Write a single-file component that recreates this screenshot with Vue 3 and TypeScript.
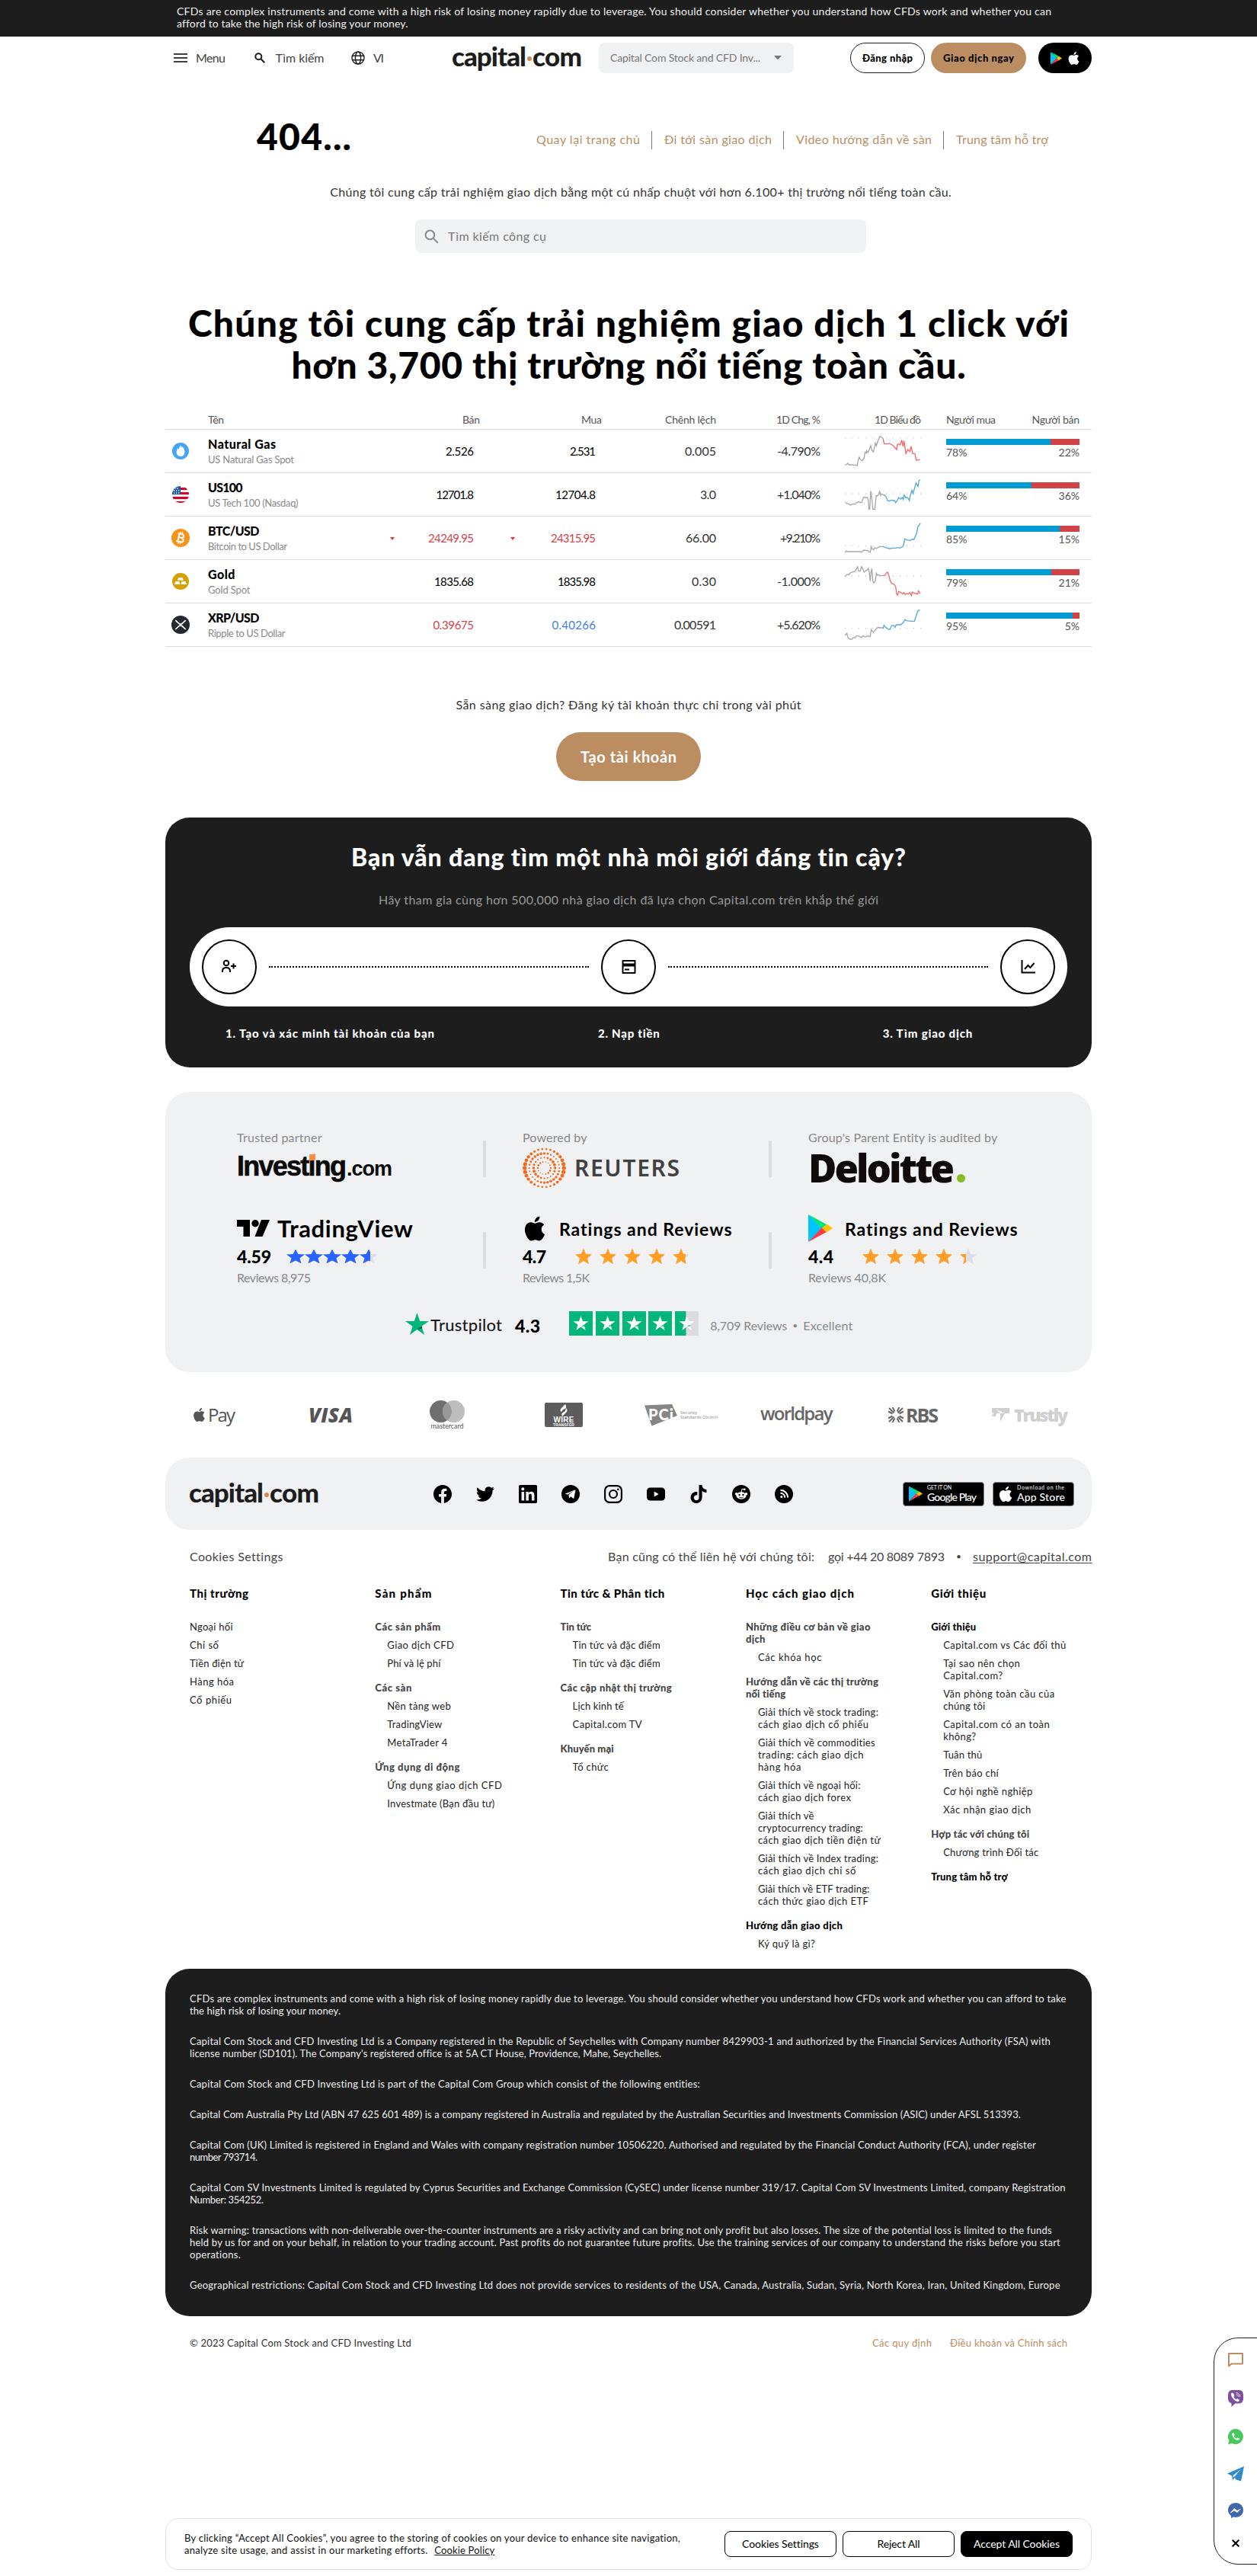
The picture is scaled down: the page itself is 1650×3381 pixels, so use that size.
<script setup lang="ts">
type Pair = [string, number]
interface Quote {
  icon: string; name: Pair; sub: Pair; sell: Pair; buy: Pair; sellTone?: string; buyTone?: string
  spread: Pair; chg: Pair; up: boolean; base: number; prev: string; day: string; long: number; arrow?: boolean
}
interface LinkItem { lines: Pair[]; head?: boolean; dark?: boolean; gap?: boolean; flat?: boolean }
interface LinkColumn { title: Pair; items: LinkItem[] }

/* Tracks a single line of text so that it fills the given width. */
const vFit = {
  mounted(el: HTMLElement, binding: { value: number }) {
    const count = Array.from(el.textContent ?? '').length
    if (count < 2) return
    const natural = el.getBoundingClientRect().width
    const spacing = (binding.value - natural) / (count - 1)
    el.style.letterSpacing = spacing.toFixed(3) + 'px'
    el.style.marginRight = (-spacing).toFixed(3) + 'px'
  },
}

const quotes: Quote[] = [
  { icon: 'gas', name: ['Natural Gas', 89], sub: ['US Natural Gas Spot', 113], sell: ['2.526', 37], buy: ['2.531', 34], spread: ['0.005', 41], chg: ['-4.790%', 57], up: false, base: 8, long: 78,
    prev: '0,116 8,112 11,108 16,114 28,114 36,116 40,114 48,118 50,108 54,92 57,84 60,92 68,98 72,94 76,86 80,64 84,68 86,58 91,66 97,52 102,38 106,56 112,64 118,40 120,26 124,40 130,22 136,6 138,2 142,4 150,10',
    day: '150,10 155,32 170,32 175,30 190,38 196,46 204,54 207,34 212,32 218,36 224,16 229,42 233,20 240,70 248,54 256,62 261,42 267,70 276,70 281,96 296,94' },
  { icon: 'us', name: ['US100', 45.5], sub: ['US Tech 100 (Nasdaq)', 118.5], sell: ['12701.8', 49.5], buy: ['12704.8', 53], spread: ['3.0', 21], chg: ['+1.040%', 57], up: true, base: 57, long: 64,
    prev: '0,90 8,96 16,98 22,102 30,98 40,98 45,94 54,88 60,92 66,92 70,80 76,70 82,72 88,72 92,80 95,118 98,118 102,46 108,90 110,118 118,118 121,92 123,64 128,66 133,60 137,46 141,64 143,58 150,60',
    day: '150,60 158,64 164,72 168,84 174,86 182,82 190,84 196,84 200,92 206,84 212,72 220,78 226,72 230,80 234,62 240,74 244,70 250,76 254,84 258,62 264,44 268,56 274,38 280,14 288,28 292,6 296,2' },
  { icon: 'btc', name: ['BTC/USD', 67.5], sub: ['Bitcoin to US Dollar', 104], sell: ['24249.95', 60], buy: ['24315.95', 59], sellTone: 'red', buyTone: 'red', arrow: true, spread: ['66.00', 40], chg: ['+9.210%', 53], up: true, base: 92, long: 85,
    prev: '0,118 4,112 10,114 30,114 60,114 66,116 74,108 90,110 96,116 100,116 104,94 108,104 114,106 118,98 124,102 130,98 140,94 150,94',
    day: '150,94 160,98 176,102 190,100 200,100 206,98 216,100 222,98 230,92 236,64 244,68 256,70 264,66 272,66 278,52 282,44 288,14 294,8 297,2' },
  { icon: 'gold', name: ['Gold', 35.5], sub: ['Gold Spot', 55.5], sell: ['1835.68', 52], buy: ['1835.98', 50], spread: ['0.30', 32], chg: ['-1.000%', 57], up: false, base: 39, long: 79,
    prev: '0,42 6,36 10,32 16,34 20,28 28,24 40,20 46,10 50,2 54,20 60,20 66,2 70,10 76,24 84,18 92,10 96,22 100,60 102,30 106,10 110,60 114,66 120,58 124,28 128,36 132,34 140,38 150,38',
    day: '150,38 158,36 164,26 168,24 172,32 178,56 184,68 192,70 200,80 204,110 208,114 212,100 220,104 228,110 232,104 238,112 244,108 250,110 256,104 262,116 266,102 272,106 280,108 286,110 290,98 297,108' },
  { icon: 'xrp', name: ['XRP/USD', 67.5], sub: ['Ripple to US Dollar', 101.5], sell: ['0.39675', 53.5], buy: ['0.40266', 57.5], sellTone: 'red', buyTone: 'blue', spread: ['0.00591', 55], chg: ['+5.620%', 57], up: true, base: 74, long: 95,
    prev: '0,102 8,94 12,110 18,116 26,118 34,110 40,112 46,104 54,104 60,108 66,110 72,104 80,108 90,104 100,106 104,78 112,90 122,78 130,70 140,72 150,72',
    day: '150,76 154,62 160,70 172,78 178,78 184,64 192,62 198,70 202,60 220,60 230,52 236,40 244,44 260,46 274,46 280,28 288,4 296,2' },
]

const row = (text: string, width: number): LinkItem => ({ lines: [[text, width]] })
const rows = (...lines: Pair[]): LinkItem => ({ lines })
const flat = (text: string, width: number): LinkItem => ({ lines: [[text, width]], flat: true })
const head = (text: string, width: number, gap = true, dark = false): LinkItem => ({ lines: [[text, width]], head: true, gap, dark })

const columns: LinkColumn[] = [
  { title: ['Thị trường', 77], items: [flat('Ngoại hối', 56.5), flat('Chỉ số', 38), flat('Tiền điện tử', 71), flat('Hàng hóa', 58), flat('Cổ phiếu', 55)] },
  { title: ['Sản phẩm', 74], items: [
    head('Các sản phẩm', 86, false), row('Giao dịch CFD', 87.5), row('Phí và lệ phí', 70),
    head('Các sàn', 48), row('Nền tảng web', 83.5), row('TradingView', 72), row('MetaTrader 4', 79),
    head('Ứng dụng di động', 111), row('Ứng dụng giao dịch CFD', 150.5), row('Investmate (Bạn đầu tư)', 141)] },
  { title: ['Tin tức & Phân tich', 137], items: [
    head('Tin tức', 40.5, false), row('Tin tức và đặc điểm', 115), row('Tin tức và đặc điểm', 115),
    head('Các cập nhật thị trường', 146), row('Lịch kinh tế', 67), row('Capital.com TV', 91),
    head('Khuyến mại', 70), row('Tổ chức', 47)] },
  { title: ['Học cách giao dịch', 142], items: [
    { head: true, lines: [['Những điều cơ bản về giao', 163.5], ['dịch', 25.5]] }, row('Các khóa học', 83.5),
    { head: true, gap: true, lines: [['Hướng dẫn về các thị trường', 174], ['nổi tiếng', 52.5]] },
    rows(['Giải thích về stock trading:', 158], ['cách giao dịch cổ phiếu', 145]),
    rows(['Giải thích về commodities', 154], ['trading: cách giao dịch', 138.5], ['hàng hóa', 56.5]),
    rows(['Giải thích về ngoại hối:', 134.5], ['cách giao dịch forex', 122]),
    rows(['Giải thích về', 73.5], ['cryptocurrency trading:', 138], ['cách giao dịch tiền điện tử', 161]),
    rows(['Giải thích về Index trading:', 158], ['cách giao dịch chỉ số', 128.5]),
    rows(['Giải thích về ETF trading:', 146.5], ['cách thức giao dịch ETF', 145]),
    head('Hướng dẫn giao dịch', 127, true, true), row('Ký quỹ là gì?', 75)] },
  { title: ['Giới thiệu', 72], items: [
    head('Giới thiệu', 59, false, true), row('Capital.com vs Các đối thủ', 161),
    rows(['Tại sao nên chọn', 100.5], ['Capital.com?', 78]),
    rows(['Văn phòng toàn cầu của', 146], ['chúng tôi', 55]),
    rows(['Capital.com có an toàn', 139.5], ['không?', 43]),
    row('Tuân thủ', 51), row('Trên báo chí', 72.5), row('Cơ hội nghề nghiệp', 117), row('Xác nhận giao dịch', 115),
    head('Hợp tác với chúng tôi', 129), row('Chương trình Đối tác', 125), head('Trung tâm hỗ trợ', 100.5, true, true)] },
]

const legal: Pair[][] = [
  [['CFDs are complex instruments and come with a high risk of losing money rapidly due to leverage. You should consider whether you understand how CFDs work and whether you can afford to take', 1150], ['the high risk of losing your money.', 198]],
  [['Capital Com Stock and CFD Investing Ltd is a Company registered in the Republic of Seychelles with Company number 8429903-1 and authorized by the Financial Services Authority (FSA) with', 1130], ["license number (SD101). The Company's registered office is at 5A CT House, Providence, Mahe, Seychelles.", 618.5]],
  [['Capital Com Stock and CFD Investing Ltd is part of the Capital Com Group which consist of the following entities:', 670.5]],
  [['Capital Com Australia Pty Ltd (ABN 47 625 601 489) is a company registered in Australia and regulated by the Australian Securities and Investments Commission (ASIC) under AFSL 513393.', 1091]],
  [['Capital Com (UK) Limited is registered in England and Wales with company registration number 10506220. Authorised and regulated by the Financial Conduct Authority (FCA), under register', 1111], ['number 793714.', 89]],
  [['Capital Com SV Investments Limited is regulated by Cyprus Securities and Exchange Commission (CySEC) under license number 319/17. Capital Com SV Investments Limited, company Registration', 1150], ['Number: 354252.', 97]],
  [['Risk warning: transactions with non-deliverable over-the-counter instruments are a risky activity and can bring not only profit but also losses. The size of the potential loss is limited to the funds', 1132], ['held by us for and on your behalf, in relation to your trading account. Past profits do not guarantee future profits. Use the training services of our company to understand the risks before you start', 1142.5], ['operations.', 67]],
  [['Geographical restrictions: Capital Com Stock and CFD Investing Ltd does not provide services to residents of the USA, Canada, Australia, Sudan, Syria, North Korea, Iran, United Kingdom, Europe', 1143]],
]

/* Concentric rings of dots; the dots swell along an axis that turns from ring to ring. */
const rings = [{ r: 8.2, n: 14, s: 1, t: 0.9 }, { r: 13.7, n: 20, s: 1.45, t: -0.9 }, { r: 19.2, n: 28, s: 1.35, t: 2.2 }, { r: 25, n: 30, s: 1.95, t: 0 }]
const reutersDots = rings.flatMap((ring) => Array.from({ length: ring.n }, (_, i) => {
  const a = (i / ring.n) * Math.PI * 2
  return { x: 28.5 + ring.r * Math.cos(a) * 1.03, y: 27 + ring.r * Math.sin(a), s: ring.s * (1 + 0.35 * Math.cos(2 * a - ring.t)) }
}))

const star = 'M12 1.5l3.1 7.2 7.9.7-6 5.1 1.9 7.7L12 18l-6.9 4.2L7 14.5 1 9.4l7.9-.7z'
const apple = 'M12.152 6.896c-.948 0-2.415-1.078-3.96-1.04-2.04.027-3.91 1.183-4.961 3.014-2.117 3.675-.546 9.103 1.519 12.09 1.013 1.454 2.208 3.09 3.792 3.039 1.52-.065 2.09-.987 3.935-.987 1.831 0 2.35.987 3.96.948 1.637-.026 2.676-1.48 3.676-2.948 1.156-1.688 1.636-3.325 1.662-3.415-.039-.013-3.182-1.221-3.22-4.857-.026-3.04 2.48-4.494 2.597-4.559-1.429-2.09-3.623-2.324-4.39-2.376-2-.156-3.675 1.09-4.61 1.09zM15.53 3.83c.843-1.012 1.4-2.427 1.245-3.83-1.207.052-2.662.805-3.532 1.818-.78.896-1.454 2.338-1.273 3.714 1.338.104 2.715-.688 3.559-1.701'
const fills = [100, 100, 100, 100]
const ratings = {
  tv: [...fills, 60], ios: [...fills, 78], android: [...fills, 35],
}
</script>

<template>
  <div class="page">
    <div class="topbar">
      <div><span v-fit="1148">CFDs are complex instruments and come with a high risk of losing money rapidly due to leverage. You should consider whether you understand how CFDs work and whether you can</span></div>
      <div><span v-fit="303">afford to take the high risk of losing your money.</span></div>
    </div>

    <header class="header">
      <svg class="ic-menu" width="18" height="12" viewBox="0 0 18 12"><path d="M0 1h18M0 6h18M0 11h18" stroke="#000" stroke-width="1.7" /></svg>
      <span class="nav nav-menu" v-fit="39">Menu</span>
      <svg class="ic-search" width="16" height="16" viewBox="0 0 16 16" fill="none" stroke="#1d1d1d" stroke-width="2"><circle cx="6.3" cy="6.3" r="4" /><path d="M9.3 9.3l5 5" /></svg>
      <span class="nav nav-search" v-fit="64">Tìm kiếm</span>
      <svg class="ic-globe" width="18" height="18" viewBox="0 0 18 18" fill="none" stroke="#1d1d1d" stroke-width="1.4"><circle cx="9" cy="9" r="8" /><ellipse cx="9" cy="9" rx="3.6" ry="8" /><path d="M1.6 6.2h14.8M1.6 11.8h14.8" /></svg>
      <span class="nav nav-lang" v-fit="14">VI</span>
      <div class="logo"><span v-fit="98">capital</span><i></i><span v-fit="65">com</span></div>
      <div class="select"><span v-fit="197">Capital Com Stock and CFD Inv...</span><svg width="10" height="6" viewBox="0 0 10 6"><path d="M0 0h10L5 5.5z" fill="#777" /></svg></div>
      <button class="btn login"><span v-fit="66">Đăng nhập</span></button>
      <button class="btn trade"><span v-fit="93">Giao dịch ngay</span></button>
      <div class="apps">
        <svg width="15" height="17" viewBox="0 0 32 36"><path d="M0 1v34l17-17z" fill="#00c8ff" /><path d="M0 0l23 12-6 6z" fill="#00e676" /><path d="M0 36l23-12-6-6z" fill="#ff3a44" /><path d="M23 12l9 6-9 6-6-6z" fill="#ffc107" /></svg>
        <svg width="17" height="17" viewBox="0 0 24 24"><path :d="apple" fill="#fff" /></svg>
      </div>
    </header>

    <section class="hero">
      <div class="hero-row">
        <h1><span v-fit="124">404...</span></h1>
        <nav>
          <a><span v-fit="136">Quay lại trang chủ</span></a>
          <a><span v-fit="141">Đi tới sàn giao dịch</span></a>
          <a><span v-fit="178">Video hướng dẫn về sàn</span></a>
          <a><span v-fit="121">Trung tâm hỗ trợ</span></a>
        </nav>
      </div>
      <p class="lead"><span v-fit="816">Chúng tôi cung cấp trải nghiệm giao dịch bằng một cú nhấp chuột với hơn 6.100+ thị trường nổi tiếng toàn cầu.</span></p>
      <div class="searchbox">
        <svg width="19" height="19" viewBox="0 0 19 19" fill="none" stroke="#8a8a8a" stroke-width="2"><circle cx="7.4" cy="7.4" r="5.8" /><path d="M11.6 11.6l6.2 6.2" /></svg>
        <span v-fit="129">Tìm kiếm công cụ</span>
      </div>
    </section>

    <h2 class="title">
      <div><span v-fit="1156">Chúng tôi cung cấp trải nghiệm giao dịch 1 click với</span></div>
      <div><span v-fit="886">hơn 3,700 thị trường nổi tiếng toàn cầu.</span></div>
    </h2>

    <section class="table">
      <div class="tr th">
        <div class="c-icon"></div>
        <div class="c-name"><span v-fit="21">Tên</span></div>
        <div class="c-sell out"><span v-fit="23">Bán</span></div>
        <div class="c-buy out"><span v-fit="27">Mua</span></div>
        <div class="c-spread"><span v-fit="67">Chênh lệch</span></div>
        <div class="c-chg"><span v-fit="58">1D Chg, %</span></div>
        <div class="c-chart"><span v-fit="61">1D Biểu đồ</span></div>
        <div class="c-mood"><span v-fit="65">Người mua</span><span v-fit="62.5">Người bán</span></div>
      </div>
      <div v-for="q in quotes" :key="q.icon" class="tr">
        <div class="c-icon">
          <svg v-if="q.icon === 'gas'" width="22" height="22" viewBox="0 0 22 22"><circle cx="11" cy="11" r="11" fill="#45a5f7" /><path d="M11.4 3.5c.8 1.4 1 2.300 1.300 3.500.5-.5.6-1.200.6-1.900 1.900 2 3.300 4.600 3.100 7.300-.2 3.300-2.300 5.600-5.300 5.600-3.200 0-5.500-2.400-5.500-5.500 0-2.400 1.200-4.200 2.200-5.500.1.900.3 1.600.9 2.100.2-2.200.9-4.200 2.700-5.600z" fill="#fff" /></svg>
          <svg v-else-if="q.icon === 'us'" width="22" height="22" viewBox="0 0 22 22"><clipPath id="flag"><circle cx="11" cy="11" r="11" /></clipPath><g clip-path="url(#flag)"><path fill="#f4f4f4" d="M0 0h22v22H0z" /><path fill="#d80027" d="M0 2h22v3H0zM0 8h22v3H0zM0 14h22v3H0zM0 20h22v2H0z" /><path fill="#1457b0" d="M0 0h11v11H0z" /><path d="M3.500 3h6M2 6h8M2 9h8" stroke="#fff" stroke-width="1.300" stroke-dasharray="1.300 1.700" /></g></svg>
          <svg v-else-if="q.icon === 'btc'" class="big" width="24" height="24" viewBox="0 0 24 24"><circle cx="12" cy="12" r="12" fill="#f7931a" /><g transform="rotate(13 12 12)" fill="none" stroke="#fff" stroke-width="2"><path d="M9.300 6.500v11M7.300 6.800h5.700c3.300 0 3.300 4.800 0 4.800H9.500M13 11.900c4.300 0 4.300 5.300 0 5.300H7.300" /><path d="M10.500 4v3M13 4v3M10.500 17v3M13 17v3" stroke-width="1.300" /></g></svg>
          <svg v-else-if="q.icon === 'gold'" width="22" height="22" viewBox="0 0 22 22"><circle cx="11" cy="11" r="11" fill="#d99e00" /><path d="M8.500 6h5l1.500 3.700H7zM4.500 11h4.800l1.300 4H3zM12.700 11h4.800l1.500 4h-7.600z" fill="#fff" /></svg>
          <svg v-else class="big" width="24" height="24" viewBox="0 0 24 24"><circle cx="12" cy="12" r="12" fill="#23292f" /><path d="M5.300 6.200l4.300 4a3.600 3.600 0 0 0 4.800 0l4.300-4M5.300 18l4.300-4a3.600 3.600 0 0 1 4.800 0l4.300 4" fill="none" stroke="#fff" stroke-width="1.700" /></svg>
        </div>
        <div class="c-name">
          <div class="name"><span v-fit="q.name[1]">{{ q.name[0] }}</span></div>
          <div class="sub"><span v-fit="q.sub[1]">{{ q.sub[0] }}</span></div>
        </div>
        <div class="c-sell" :class="q.sellTone"><svg v-if="q.arrow" width="6" height="4" viewBox="0 0 6 4"><path d="M0 0h6L3 4z" fill="#e5343d" /></svg><span v-fit="q.sell[1]">{{ q.sell[0] }}</span></div>
        <div class="c-buy" :class="q.buyTone"><svg v-if="q.arrow" width="6" height="4" viewBox="0 0 6 4"><path d="M0 0h6L3 4z" fill="#e5343d" /></svg><span v-fit="q.buy[1]">{{ q.buy[0] }}</span></div>
        <div class="c-spread"><span v-fit="q.spread[1]">{{ q.spread[0] }}</span></div>
        <div class="c-chg"><span v-fit="q.chg[1]">{{ q.chg[0] }}</span></div>
        <div class="c-chart">
          <svg width="100" height="40" viewBox="0 0 300 120" fill="none" stroke-width="4">
            <path :d="`M0 ${q.base}H300`" stroke="#c4c4c4" stroke-width="4" stroke-dasharray="3 24" />
            <polyline :points="q.prev" stroke="#a8a8a8" />
            <polyline :points="q.day" :stroke="q.up ? '#55a9d5' : '#f2696f'" />
          </svg>
        </div>
        <div class="c-mood col">
          <div class="bar"><i :style="{ width: q.long + '%' }"></i></div>
          <div class="pct"><span>{{ q.long }}%</span><span>{{ 100 - q.long }}%</span></div>
        </div>
      </div>
    </section>

    <section class="cta">
      <p><span v-fit="453">Sẵn sàng giao dịch? Đăng ký tài khoản thực chỉ trong vài phút</span></p>
      <button><span v-fit="126">Tạo tài khoản</span></button>
    </section>

    <section class="steps">
      <h3><span v-fit="729">Bạn vẫn đang tìm một nhà môi giới đáng tin cậy?</span></h3>
      <p><span v-fit="656">Hãy tham gia cùng hơn 500,000 nhà giao dịch đã lựa chọn Capital.com trên khắp thế giới</span></p>
      <div class="pill">
        <div class="ring"><svg width="22" height="20" viewBox="0 0 22 20" fill="none" stroke="#000" stroke-width="2"><circle cx="7" cy="5" r="3.300" /><path d="M2 17v-1.500C2 12.500 4.200 11 7 11s5 1.500 5 4.500V17M13 9h7M16.500 5.500v7" /></svg></div>
        <div class="dots"></div>
        <div class="ring"><svg width="21" height="18" viewBox="0 0 21 18"><path d="M2.500 1h16v16h-16z" fill="none" stroke="#000" stroke-width="2" stroke-linejoin="round" /><path d="M2 4.500h17v4H2zM5 11.500h6v2H5z" /></svg></div>
        <div class="dots"></div>
        <div class="ring"><svg width="19" height="18" viewBox="0 0 19 18" fill="none" stroke="#000" stroke-width="2"><path d="M1.500 0v16.500H19M5 12l4.500-5 3 3 5-6" /></svg></div>
      </div>
      <div class="labels"><span class="l1" v-fit="274">1. Tạo và xác minh tài khoản của bạn</span><span class="l2" v-fit="81">2. Nạp tiền</span><span class="l3" v-fit="117.5">3. Tìm giao dịch</span></div>
    </section>

    <section class="trust">
      <div class="trow r1">
        <div class="tcol">
          <div class="cap"><span v-fit="111.5">Trusted partner</span></div>
          <div class="investing"><b><span v-fit="144">Investing</span></b><span class="tld" v-fit="60">.com</span><i></i></div>
        </div>
        <div class="vr"></div>
        <div class="tcol">
          <div class="cap"><span v-fit="84.5">Powered by</span></div>
          <div class="reuters">
            <svg width="57" height="54" viewBox="0 0 57 54" fill="#f36a1e"><circle v-for="(d, i) in reutersDots" :key="i" :cx="d.x" :cy="d.y" :r="d.s" /></svg>
            <span v-fit="138">REUTERS</span>
          </div>
        </div>
        <div class="vr"></div>
        <div class="tcol">
          <div class="cap"><span v-fit="248.500">Group's Parent Entity is audited by</span></div>
          <div class="deloitte"><span v-fit="192">Deloitte</span><i></i></div>
        </div>
      </div>
      <div class="trow r2">
        <div class="tcol">
          <div class="brand"><svg width="43" height="22" viewBox="0 0 43 22"><path d="M0 0h17v22H8.500V9H0z" /><circle cx="24" cy="4.700" r="4.700" /><path d="M32 0h11l-9.500 22h-10z" /></svg><span class="tv" v-fit="178">TradingView</span></div>
          <div class="rate"><span class="num" v-fit="45">4.59</span><div class="stars tight"><svg v-for="(f, i) in ratings.tv" :key="i" width="24" height="22" viewBox="1 0 22 24" preserveAspectRatio="none"><linearGradient :id="'tv' + i"><stop :offset="f + '%'" stop-color="#2962ff" /><stop :offset="f + '%'" stop-color="#dcdde6" /></linearGradient><path :d="star" :fill="`url(#tv${i})`" /></svg></div></div>
          <div class="cap"><span v-fit="97">Reviews 8,975</span></div>
        </div>
        <div class="vr"></div>
        <div class="tcol">
          <div class="brand"><svg width="32" height="33" viewBox="0 0 24 24"><path :d="apple" /></svg><span class="rr" v-fit="227">Ratings and Reviews</span></div>
          <div class="rate"><span class="num" v-fit="31">4.7</span><div class="stars"><svg v-for="(f, i) in ratings.ios" :key="i" width="24" height="24" viewBox="0 0 24 24"><linearGradient :id="'ios' + i"><stop :offset="f + '%'" stop-color="#ff9f29" /><stop :offset="f + '%'" stop-color="#dcdde6" /></linearGradient><path :d="star" :fill="`url(#ios${i})`" /></svg></div></div>
          <div class="cap"><span v-fit="88">Reviews 1,5K</span></div>
        </div>
        <div class="vr"></div>
        <div class="tcol">
          <div class="brand"><svg width="32" height="36" viewBox="0 0 32 36"><path d="M0 0v36l18-18z" fill="#00c3ff" /><path d="M0 0l24 13-6 6z" fill="#00e676" /><path d="M0 36l24-13-6-6z" fill="#ff3a44" /><path d="M24 12.500l8 5.500-8 5.500-6-5.500z" fill="#ffc107" /></svg><span class="rr g" v-fit="227">Ratings and Reviews</span></div>
          <div class="rate"><span class="num" v-fit="33">4.4</span><div class="stars"><svg v-for="(f, i) in ratings.android" :key="i" width="24" height="24" viewBox="0 0 24 24"><linearGradient :id="'gp' + i"><stop :offset="f + '%'" stop-color="#ff9f29" /><stop :offset="f + '%'" stop-color="#dcdde6" /></linearGradient><path :d="star" :fill="`url(#gp${i})`" /></svg></div></div>
          <div class="cap"><span v-fit="102">Reviews 40,8K</span></div>
        </div>
      </div>
      <div class="pilot">
        <svg width="31" height="29" viewBox="0 0 31 29"><path d="M15.500 0l3.700 11H31l-9.600 6.800L25 29l-9.500-6.900L6 29l3.600-11.200L0 11h11.800z" fill="#04b67a" /><path d="M22.200 20.300l-.8-2.500-5.900 4.300z" fill="#005128" /></svg>
        <span class="tp" v-fit="94">Trustpilot</span>
        <span class="num" v-fit="33">4.3</span>
        <div class="boxes">
          <svg v-for="i in 5" :key="i" width="31" height="32" viewBox="0 0 31 32"><path d="M0 0h31v32H0z" :fill="i === 5 ? '#dcdce0' : '#04b67a'" /><path v-if="i === 5" d="M0 0h14.500v32H0z" fill="#04b67a" /><path d="M15.500 6l2.500 7.300h7.500l-6.100 4.500 2.300 7.200-6.200-4.400L9.300 25l2.300-7.200-6.100-4.500H13z" fill="#fff" /><path d="M19.900 19.500l-.5-1.700-3.900 2.800z" fill="#04b67a" /></svg>
        </div>
        <span class="cap2" v-fit="101">8,709 Reviews</span><span class="bullet">•</span><span class="cap2" v-fit="65">Excellent</span>
      </div>
    </section>

    <section class="pay">
      <div class="p applepay"><svg width="17" height="18" viewBox="1.500 0 21 24"><path :d="apple" fill="#555" /></svg><span v-fit="36">Pay</span></div>
      <div class="p visa"><span v-fit="58">VISA</span></div>
      <div class="p mc"><svg width="46" height="29" viewBox="0 0 46 29"><circle cx="14.500" cy="14.500" r="14.500" fill="#6f6f6f" /><circle cx="31.500" cy="14.500" r="14.500" fill="#bdbdbd" /><path d="M23 2.800a14.500 14.500 0 0 1 0 23.400a14.500 14.500 0 0 1 0-23.400z" fill="#989898" /></svg><span v-fit="43">mastercard</span></div>
      <div class="p wire"><svg width="14" height="16" viewBox="0 0 14 16" fill="#fff"><path d="M9 0L4 5c-2 2-2 4 0 5l2-3 3-1c2-2 1-4 0-6zM10 5c2 2 2 4 0 6l-5 5c-1-2-1-4 1-5l3-2z" /></svg><b v-fit="27">WIRE</b><small v-fit="28">TRANSFER</small></div>
      <div class="p pci"><div class="mark"><svg width="43" height="29" viewBox="0 0 43 29"><path d="M0 1.500L36 0l7 15L9.500 28.500z" fill="#868686" /></svg><b v-fit="33">PCi</b></div><div class="ptxt"><div><span v-fit="22">Security</span></div><div><span v-fit="49">Standards Council</span></div></div></div>
      <div class="p world"><span v-fit="95.500">worldpay</span></div>
      <div class="p rbs"><svg width="20" height="20" viewBox="0 0 20 20" stroke="#666" stroke-width="2" fill="none"><path d="M1 1l6.500 6.500M19 1l-6.500 6.500M1 19l6.500-6.500M19 19l-6.500-6.500M5.500 0l3 5.500M14.500 0l-3 5.500M5.500 20l3-5.500M14.500 20l-3-5.500M0 5.500l5.500 3M0 14.500l5.500-3M20 5.500l-5.500 3M20 14.500l-5.500-3" /></svg><span v-fit="43">RBS</span></div>
      <div class="p trustly"><svg width="23" height="18" viewBox="0 0 23 18"><path d="M0 0h23v7h-6l-6 11V7H6l-1 4H0l2-5H0z" fill="#cfcfcf" /><path d="M6 2l5 5h6z" fill="#fff" /></svg><span v-fit="71">Trustly</span></div>
    </section>

    <section class="social">
      <div class="logo"><span v-fit="98">capital</span><i></i><span v-fit="65">com</span></div>
      <div class="icons">
        <svg viewBox="0 0 24 24"><path d="M24 12.073c0-6.627-5.373-12-12-12s-12 5.373-12 12c0 5.990 4.388 10.954 10.125 11.854v-8.385H7.078v-3.470h3.047V9.430c0-3.007 1.792-4.669 4.533-4.669 1.312 0 2.686.235 2.686.235v2.953H15.830c-1.491 0-1.956.925-1.956 1.874v2.250h3.328l-.532 3.470h-2.796v8.385C19.612 23.027 24 18.062 24 12.073z" /></svg>
        <svg viewBox="0 0 24 24"><path d="M23.953 4.570a10 10 0 01-2.825.775 4.958 4.958 0 002.163-2.723c-.951.555-2.005.959-3.127 1.184a4.920 4.920 0 00-8.384 4.482C7.690 8.095 4.067 6.130 1.640 3.162a4.822 4.822 0 00-.666 2.475c0 1.710.870 3.213 2.188 4.096a4.904 4.904 0 01-2.228-.616v.060a4.923 4.923 0 003.946 4.827 4.996 4.996 0 01-2.212.085 4.936 4.936 0 004.604 3.417 9.867 9.867 0 01-6.102 2.105c-.390 0-.779-.023-1.170-.067a13.995 13.995 0 007.557 2.209c9.053 0 13.998-7.496 13.998-13.985 0-.210 0-.420-.015-.630A9.935 9.935 0 0024 4.590z" /></svg>
        <svg viewBox="0 0 24 24"><path d="M20.447 20.452h-3.554v-5.569c0-1.328-.027-3.037-1.852-3.037-1.853 0-2.136 1.445-2.136 2.939v5.667H9.351V9h3.414v1.561h.046c.477-.9 1.637-1.850 3.370-1.850 3.601 0 4.267 2.370 4.267 5.455v6.286zM5.337 7.433a2.062 2.062 0 01-2.063-2.065 2.064 2.064 0 112.063 2.065zm1.782 13.019H3.555V9h3.564v11.452zM22.225 0H1.771C.792 0 0 .774 0 1.729v20.542C0 23.227.792 24 1.771 24h20.451C23.200 24 24 23.227 24 22.271V1.729C24 .774 23.200 0 22.222 0h.003z" /></svg>
        <svg viewBox="0 0 24 24"><circle cx="12" cy="12" r="12" /><path d="M4.500 11.800L18.500 6.300 16.200 18.200l-4-3-2.100 2-.6-4.200 6-5-7.300 4.600z" fill="#fff" /></svg>
        <svg viewBox="0 0 24 24" fill="none" stroke="#000" stroke-width="2.200"><rect x="1.100" y="1.100" width="21.800" height="21.800" rx="6" /><circle cx="12" cy="12" r="5" /><circle cx="18.300" cy="5.700" r="1.300" fill="#000" stroke="none" /></svg>
        <svg viewBox="0 0 24 24"><rect y="3.500" width="24" height="17" rx="4.500" /><path d="M9.700 8.500v7l6-3.500z" fill="#fff" /></svg>
        <svg viewBox="0 0 24 24"><path d="M12.525.020c1.310-.020 2.610-.010 3.910-.020.080 1.530.630 3.090 1.750 4.170 1.120 1.110 2.700 1.620 4.240 1.790v4.030c-1.440-.050-2.890-.350-4.200-.970-.570-.260-1.100-.590-1.620-.930-.010 2.920.010 5.840-.020 8.750-.080 1.400-.540 2.790-1.350 3.940-1.310 1.920-3.580 3.170-5.910 3.210-1.430.080-2.860-.310-4.080-1.030-2.020-1.190-3.440-3.370-3.650-5.710-.020-.5-.030-1-.010-1.490.180-1.900 1.120-3.720 2.580-4.960 1.660-1.440 3.980-2.130 6.150-1.720.020 1.480-.040 2.960-.040 4.440-.990-.320-2.150-.230-3.020.370-.630.410-1.110 1.040-1.360 1.750-.210.510-.150 1.070-.140 1.610.240 1.640 1.820 3.020 3.500 2.870 1.120-.010 2.190-.660 2.770-1.610.190-.330.400-.670.410-1.060.100-1.790.060-3.570.070-5.360.010-4.030-.010-8.050.020-12.070z" /></svg>
        <svg viewBox="0 0 24 24"><circle cx="12" cy="12" r="12" /><g fill="#fff"><ellipse cx="12" cy="14" rx="6.600" ry="4.700" /><circle cx="5.600" cy="11.700" r="1.800" /><circle cx="18.400" cy="11.700" r="1.800" /><circle cx="16.300" cy="5.800" r="1.400" /></g><path d="M12 9.500l1-4.300 3.300.7" fill="none" stroke="#fff" /><circle cx="9.500" cy="13" r="1.200" /><circle cx="14.500" cy="13" r="1.200" /><path d="M9.300 16c1.500 1.200 3.900 1.200 5.400 0" fill="none" stroke="#000" /></svg>
        <svg viewBox="0 0 24 24"><circle cx="12" cy="12" r="12" /><g fill="none" stroke="#fff" stroke-width="2"><path d="M7.500 6.800a10 10 0 0 1 9.800 9.800M7.500 10.800a6 6 0 0 1 5.800 5.800" /></g><circle cx="8.800" cy="15.400" r="1.500" fill="#fff" /></svg>
      </div>
      <div class="badge"><svg width="18" height="21" viewBox="0 0 32 36"><path d="M0 0v36l18-18z" fill="#00c3ff" /><path d="M0 0l24 13-6 6z" fill="#00e676" /><path d="M0 36l24-13-6-6z" fill="#ff3a44" /><path d="M24 12.500l8 5.500-8 5.500-6-5.500z" fill="#ffc107" /></svg><div class="btxt"><small v-fit="32">GET IT ON</small><b v-fit="65">Google Play</b></div></div>
      <div class="badge b2"><svg width="18" height="20" viewBox="1.500 0 21 24"><path :d="apple" fill="#fff" /></svg><div class="btxt"><small v-fit="62">Download on the</small><b v-fit="63">App Store</b></div></div>
    </section>

    <div class="contact">
      <span class="ck" v-fit="122">Cookies Settings</span>
      <span v-fit="271">Bạn cũng có thể liên hệ với chúng tôi:</span>
      <span class="tel" v-fit="153">gọi +44 20 8089 7893</span>
      <span class="dot">•</span>
      <a><span v-fit="156">support@capital.com</span></a>
    </div>

    <div class="columns">
      <div v-for="c in columns" :key="c.title[0]" class="lcol">
        <h4><span v-fit="c.title[1]">{{ c.title[0] }}</span></h4>
        <div v-for="(it, i) in c.items" :key="i" class="li" :class="{ head: it.head, dark: it.dark, gap: it.gap, flat: it.flat }">
          <div v-for="l in it.lines" :key="l[0]"><span v-fit="l[1]">{{ l[0] }}</span></div>
        </div>
      </div>
    </div>

    <section class="legal">
      <p v-for="(p, i) in legal" :key="i">
        <span v-for="l in p" :key="l[0]" class="ln"><span v-fit="l[1]">{{ l[0] }}</span></span>
      </p>
    </section>

    <footer class="copy">
      <span v-fit="291">© 2023 Capital Com Stock and CFD Investing Ltd</span>
      <span class="links"><a v-fit="78">Các quy định</a><a v-fit="154">Điều khoản và Chính sách</a></span>
    </footer>

    <div class="cookies">
      <div class="ctext">
        <div><span v-fit="651">By clicking “Accept All Cookies”, you agree to the storing of cookies on your device to enhance site navigation,</span></div>
        <div><span v-fit="319">analyze site usage, and assist in our marketing efforts.</span><a><span v-fit="79">Cookie Policy</span></a></div>
      </div>
      <button><span v-fit="100.500">Cookies Settings</span></button>
      <button><span v-fit="56">Reject All</span></button>
      <button class="on"><span v-fit="113">Accept All Cookies</span></button>
    </div>

    <aside class="widget">
      <svg width="22" height="22" viewBox="0 0 22 22"><path d="M2 18.500V2h18v13.500H5.500z" fill="none" stroke="#bd8d62" stroke-width="2" stroke-linejoin="round" /></svg>
      <svg width="22" height="24" viewBox="0 0 22 24"><path d="M7 1h8c4 0 6 2.500 6 6.500v4.500c0 4-2 6.500-6 6.500h-4.500L5.500 23v-4.800C2.500 17.500 1 15.500 1 12V7.500C1 3.500 3 1 7 1z" fill="#7d51a0" /><path d="M6.200 4.500c-1.800.8-1.500 3-.3 5.300 1.500 3 4 5.300 7 6.400 1.700.5 3.500-1.200 2.700-2.400-.8-1-2.300-2-3-1.500l-1 .9c-1.500-.6-2.700-1.900-3.200-3.400l1-1c.3-1-1.500-4.500-3.200-4.300z" fill="#fff" /><path d="M11.500 4.500c3 .2 5 2.300 5 5.500M11.800 6.800c1.800.2 2.600 1.200 2.600 2.800" fill="none" stroke="#fff" /></svg>
      <svg width="22" height="22" viewBox="0 0 22 22"><path d="M11 1a10 10 0 1 1-4.500 19L1 21l1.300-5A10 10 0 0 1 11 1z" fill="#47c960" /><path d="M7 6.300c-1.500 1-1 3 .5 5.200 1.700 2.400 4 4.200 6 4.400 1.500.1 2.600-1 2.300-2.300l-2.400-1.100-1.200 1.200c-1.600-.6-2.900-1.900-3.500-3.500l1-1.100-1-2.500c-.6-.5-1.200-.5-1.700-.3z" fill="#fff" /></svg>
      <svg width="22" height="20" viewBox="0 0 22 20"><path d="M0 9.500L22 0l-4 19.500-6.500-2L9.500 15l-2.500 3.500-1-6z" fill="#2f8ad0" /><path d="M7.300 14.500l.6-2.700L18 4 9.500 13.500z" fill="#fff" /></svg>
      <svg width="22" height="22" viewBox="0 0 22 22"><path d="M11 1c5.700 0 10 4.200 10 9.500S16.700 20 11 20c-1 0-2-.1-2.800-.4L5 21v-3C2.500 16.300 1 13.700 1 10.500 1 5.200 5.300 1 11 1z" fill="#4167b0" /><path d="M4.500 14l4.500-5.500 4 3 4.300-2.500-4.500 4.700-3.800-3z" fill="#fff" stroke="#fff" /></svg>
      <svg width="10" height="10" viewBox="0 0 10 10"><path d="M.7.7l8.600 8.600M9.300.7L.7 9.300" stroke="#000" stroke-width="2" /></svg>
    </aside>
  </div>
</template>

<style>
body { margin: 0; background: #fff; }
</style>

<style scoped>
.page { position: relative; width: 1650px; height: 3381px; overflow: hidden; white-space: nowrap; font-family: Lato, 'Open Sans', sans-serif; color: #333; font-size: 16px; line-height: 20px; }
.page * { box-sizing: border-box; }
h1, h2, h3, h4, p { margin: 0; }
svg { display: block; flex: none; }
button { font: inherit; border: 0; padding: 0; display: flex; align-items: center; justify-content: center; flex: none; }
.topbar { height: 48px; background: #1d1d1d; color: #eee; padding: 7px 0 0 232px; font-size: 14px; line-height: 16px; }
.header { height: 56px; width: 1216px; margin-left: 217px; display: flex; align-items: center; padding-left: 11px; }
.nav { color: #444; }
.ic-menu { margin-right: 11px; }
.header .ic-search { margin-left: 36.500px; margin-right: 13px; }
.ic-globe { margin-left: 35.500px; margin-right: 11px; }
.logo { display: flex; align-items: center; font-weight: 900; font-size: 35px; line-height: 36px; color: #1d1d1d; width: 171px; height: 36px; padding-bottom: 6px; }
.logo i { width: 6px; height: 6px; border-radius: 50%; background: #c98d5d; margin: 8px 1px 0; }
.header .logo { margin-left: 89px; }
.select { margin-left: 22px; width: 256px; height: 40px; border-radius: 8px; background: #f0f1f3; color: #777; font-size: 14px; display: flex; align-items: center; justify-content: space-between; padding: 0 16px 0 15px; }
.btn { height: 40px; border-radius: 20px; font-weight: 900; font-size: 13px; color: #000; }
.login { width: 98px; margin-left: 74px; border: 1px solid #1d1d1d; background: #fff; }
.trade { width: 125px; margin-left: 8px; background: #bd8d62; }
.apps { margin-left: 16px; width: 70px; height: 40px; border-radius: 20px; background: #000; display: flex; align-items: center; padding-left: 16px; gap: 7px; }
.hero { width: 1216px; margin-left: 217px; display: flex; flex-direction: column; align-items: center; }
.hero-row { width: 100%; margin-top: 47px; height: 60px; padding: 0 57px 0 120px; display: flex; justify-content: space-between; }
h1 { font-size: 48px; line-height: 56px; font-weight: 900; color: #000; }
nav { display: flex; align-items: center; height: 24px; margin-top: 21px; color: #bd8d62; font-size: 16px; }
nav a { padding: 1px 15px 0 16px; border-left: 1px solid #777; height: 24px; }
nav a:first-child { border: 0; }
nav a:last-child { padding-right: 0; }
.lead { margin: 31px 0 0 32px; }
.searchbox { margin: 26px 0 0 32px; width: 592px; height: 44px; border-radius: 8px; background: #f1f2f4; color: #777; display: flex; align-items: center; padding-left: 12px; gap: 12px; }
.title { margin-top: 64px; text-align: center; font-size: 48px; line-height: 55px; font-weight: 900; color: #000; }
.table { width: 1216px; margin: 33px 0 0 217px; }
.tr { display: flex; align-items: center; height: 57px; border-bottom: 1px solid #dcdcdc; }
.th { height: 25px; font-size: 14px; color: #555; }
.c-icon { width: 56px; padding-left: 9px; }
.big { margin-left: -1px; }
.c-name { width: 200px; }
.name { font-weight: 900; color: #000; font-size: 16px; line-height: 20px; padding-top: 2px; box-sizing: content-box !important; }
.sub { font-size: 13px; line-height: 20px; color: #8a8a8a; }
.c-sell, .c-buy { display: flex; align-items: center; justify-content: flex-end; color: #000; width: 149px; font-size: 15px; }
.c-buy { width: 160px; }
.th .out { color: #555; left: 8px; position: relative; font-size: 14px; }
.c-sell svg { margin: 2px auto 0 39px; }
.c-buy svg { margin: 2px auto 0 48px; }
.tr .red { color: #d5434b; }
.tr .blue { color: #3f7fe0; }
.c-spread { width: 158px; text-align: right; }
.c-chg { width: 137px; text-align: right; }
.c-chart { width: 132px; display: flex; justify-content: flex-end; }
.c-mood { width: 208px; padding-left: 33px; display: flex; justify-content: space-between; }
.c-mood.col { display: block; padding-bottom: 4px; }
.bar { height: 8px; background: #cf4347; display: flex; }
.bar i { background: #009bd3; }
.pct { display: flex; justify-content: space-between; font-size: 14px; line-height: 20px; color: #555; }
.cta { display: flex; flex-direction: column; align-items: center; padding-top: 66px; }
.cta button { margin-top: 26px; width: 190px; height: 64px; border-radius: 32px; background: #bd8d62; color: #fff; font-weight: 700; font-size: 20px; }
.steps { margin: 48px 0 0 217px; width: 1216px; height: 328px; border-radius: 32px; background: #1d1d1d; color: #fff; padding: 32px 32px 0; }
.steps h3 { text-align: center; font-size: 32px; line-height: 40px; font-weight: 900; }
.steps p { text-align: center; color: #999; margin-top: 26px; }
.pill { margin-top: 26px; height: 104px; border-radius: 52px; background: #fff; padding: 16px; display: flex; align-items: center; }
.ring { width: 72px; height: 72px; border: 2px solid #000; border-radius: 50%; display: flex; align-items: center; justify-content: center; flex: none; }
.dots { flex: 1; margin: 0 16px; border-top: 2px dotted #000; }
.labels { display: flex; margin-top: 25px; font-weight: 900; font-size: 15px; }
.l1 { padding-left: 0; margin-left: 47px; }
.l2 { position: relative; left: 215px; }
.l3 { position: relative; left: 508px; }
.trust { margin: 32px 0 0 217px; width: 1216px; height: 368px; border-radius: 32px; background: #f0f1f3; padding: 50px 0 0 94px; }
.trow { display: flex; color: #000; }
.tcol { width: 323px; }
.vr { width: 4px; height: 48px; border-radius: 2px; background: #dcdcde; margin: 14px 48px 0 0; }
.cap { color: #888; font-size: 16px; line-height: 20px; }
.investing { display: flex; align-items: baseline; position: relative; height: 44px; padding-top: 10px; line-height: 36px; font-family: 'Liberation Sans', sans-serif; color: #0a0a0a; }
.investing b { font-size: 36px; font-weight: 700; -webkit-text-stroke: 0.6px #0a0a0a; }
.tld { font-weight: 700; font-size: 27px; }
.investing i { position: absolute; left: 95px; top: 12px; width: 8px; height: 8px; background: #ff8a3d; transform: skewY(-8deg); }
.reuters { display: flex; align-items: center; margin-top: 3px; gap: 11px; font: 600 30px/54px 'Noto Sans', sans-serif; color: #404040; }
.deloitte { display: flex; align-items: baseline; font: 800 51px/58px 'Open Sans', sans-serif; color: #0f0b0b; gap: 3px; }
.deloitte i { width: 11px; height: 11px; border-radius: 50%; background: #86bc24; }
.r1 { height: 113px; }
.r2 .vr { margin-top: 21px; }
.brand { display: flex; align-items: center; height: 36px; margin-top: -1px; }
.brand svg { position: relative; top: -1px; }
.tv { font-size: 31px; font-weight: 700; margin-left: 10px; padding-bottom: 3px; }
.brand .rr { font-size: 23px; font-weight: 700; margin-left: 16px; }
.rate { display: flex; align-items: center; height: 36px; }
.num { font-size: 23px; font-weight: 900; color: #000; }
.stars { display: flex; gap: 8px; margin-left: 37px; }
.tight { gap: 0; margin-left: 20px; }
.r2 .cap { margin-top: 0; }
.r2 { height: 112px; }
.pilot { display: flex; align-items: center; height: 32px; margin-left: 221px; margin-top: 13px; }
.tp { font-size: 22px; font-weight: 500; color: #1b1b21; margin-left: 2px; margin-top: 4px; }
.pilot .num { margin-left: 17px; margin-top: 5px; font-size: 23px; }
.boxes { display: flex; gap: 3.800px; margin-left: 38px; }
.cap2 { color: #888; margin-top: 6px; }
.boxes + .cap2 { margin-left: 15px; }
.bullet { color: #888; margin-top: 6px; width: 21px; text-align: center; font-size: 12px; }
.pay { margin: 0 0 0 253px; height: 112px; display: flex; align-items: center; color: #555; }
.p { display: flex; align-items: center; flex: none; }
.applepay { width: 55px; gap: 3px; font: 500 24px/24px 'Open Sans', sans-serif; }
.visa { width: 58px; margin-left: 97px; font: italic 800 26px/26px 'Open Sans', sans-serif; }
.mc { width: 46px; margin-left: 101px; flex-direction: column; font: 9px/9px Lato, sans-serif; }
.wire { width: 50px; margin-left: 105px; flex-direction: column; height: 32px; background: #5c5c5c; color: #fff; border-radius: 2px; padding-top: 2px; }
.wire b { font: 700 10px/9px 'Liberation Sans', sans-serif; }
.wire small { font: 700 5px/5px 'Liberation Sans', sans-serif; }
.pci { width: 96px; margin-left: 81px; gap: 4px; }
.mark { position: relative; }
.mark b { position: absolute; left: 5px; top: 3px; color: #fff; font: 900 20px/20px Lato, sans-serif; }
.ptxt { font: 6px/6.500px 'Open Sans', sans-serif; color: #888; }
.world { width: 96px; margin-left: 56px; font: 600 24px/24px 'Open Sans', sans-serif; padding-bottom: 4px; color: #666; }
.rbs { width: 66px; margin-left: 72px; gap: 3px; font: 700 25px/25px 'Open Sans', sans-serif; color: #666; }
.trustly { margin-left: 70px; gap: 6px; font: 800 23px/23px 'Open Sans', sans-serif; color: #cfcfcf; }
.social { margin-left: 217px; width: 1216px; height: 95px; border-radius: 32px; background: #f0f1f3; display: flex; align-items: center; padding-left: 31px; }
.icons { display: flex; gap: 32px; margin-left: 150px; margin-right: 144px; }
.icons svg { width: 24px; height: 24px; }
.badge { width: 107px; height: 32px; border-radius: 4px; background: #000; border: 1px solid #888; color: #fff; display: flex; align-items: center; padding-left: 7px; gap: 6px; flex: none; }
.b2 { margin-left: 11px; }
.btxt { display: flex; flex-direction: column; align-items: flex-start; }
.btxt small { font-size: 7px; line-height: 9px; }
.btxt b { font-size: 14px; line-height: 16px; font-weight: 500; }
.contact { display: flex; margin: 25px 0 0 249px; width: 1184px; height: 21px; color: #444; }
.ck { display: block; }
.contact .ck + span { margin-left: auto; }
.contact .tel { position: relative; left: 18px; }
.dot { width: 55px; text-align: center; padding-left: 18px; font-size: 12px; }
.contact a { text-decoration: underline; width: 156px; text-underline-offset: 2px; }
.columns { display: flex; margin: 28px 0 0 249px; height: 502px; }
.lcol { width: 243.300px; padding-top: 1px; font-size: 13px; line-height: 16px; color: #222; }
h4 { font-size: 15px; line-height: 16px; font-weight: 900; color: #000; margin-bottom: 28px; }
.li { padding-left: 16px; margin-bottom: 8px; }
.flat, .head { padding-left: 0; }
.head { font-weight: 900; color: #444; }
.gap { margin-top: 16px; }
.dark { color: #000; }
.legal { margin-left: 217px; width: 1216px; height: 456px; border-radius: 32px; background: #1d1d1d; color: #eee; padding: 31px 32px; font-size: 13px; line-height: 16px; }
.legal p { margin-bottom: 24px; }
.ln { display: block; }
.copy { display: flex; justify-content: space-between; margin: 25px 0 0 249px; width: 1152px; font-size: 13px; }
.links { display: flex; gap: 24px; color: #bd8d62; }
.cookies { position: absolute; left: 217px; top: 3305px; width: 1216px; height: 68px; border: 1px solid #e0e0e0; border-radius: 17px; background: #fff; display: flex; align-items: center; padding-left: 24px; color: #111; font-size: 14px; }
.ctext { width: 709px; line-height: 16px; font-size: 13px; }
.ctext a { margin-left: 9px; text-decoration: underline; }
.cookies button { width: 147px; height: 34px; border: 1px solid #000; border-radius: 8px; background: #fff; margin-right: 8px; }
.cookies .on { background: #000; color: #fff; margin-right: 0; }
.widget { position: absolute; left: 1593px; top: 3068px; width: 58px; height: 298px; border: 1px solid #222; border-radius: 32px 0 0 32px; background: #fff; display: flex; flex-direction: column; align-items: center; justify-content: space-between; padding: 18px 0 22px; }
</style>
